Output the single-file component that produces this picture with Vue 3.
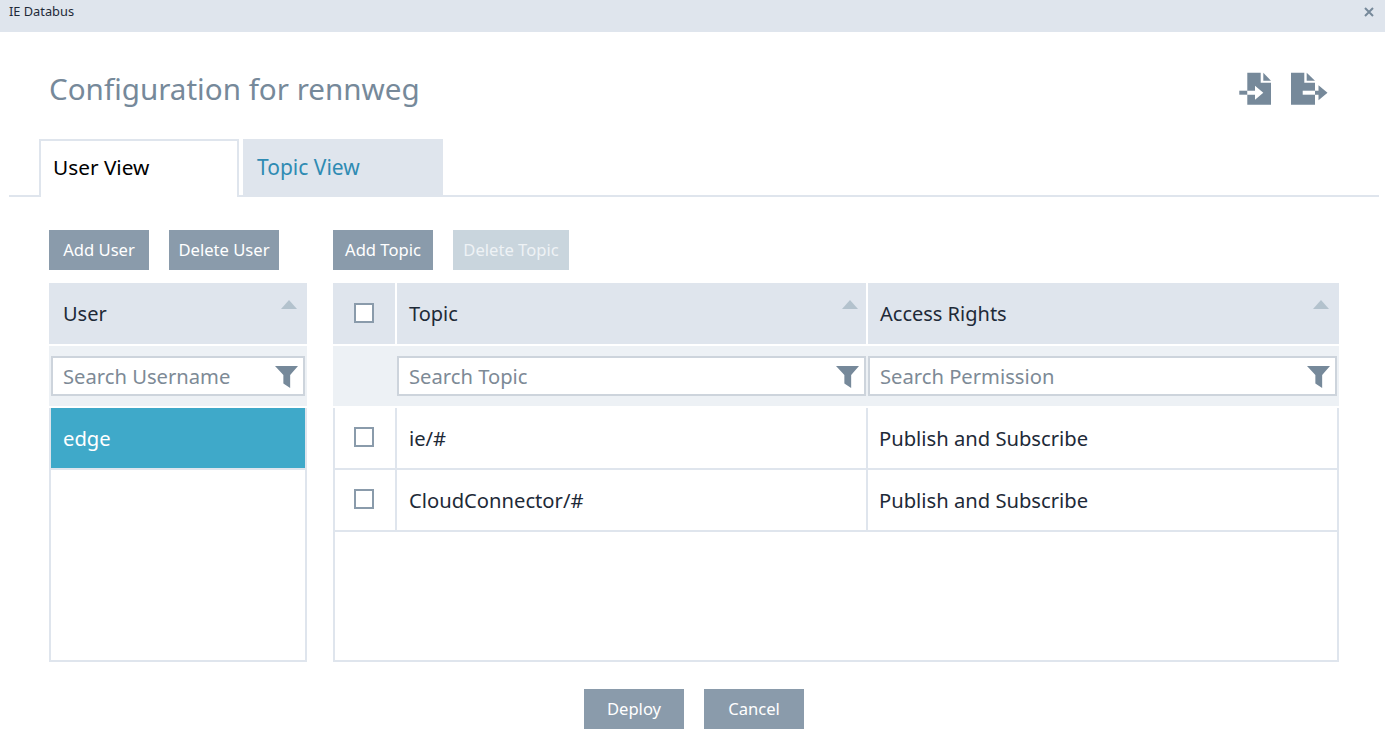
<template>
  <div class="page">
    <div class="titlebar">
      <span>IE Databus</span>
      <svg class="close" width="10" height="10" viewBox="0 0 10 10"><path d="M1 1l8 8M9 1l-8 8" stroke="#76899a" stroke-width="2" fill="none" /></svg>
    </div>

    <div class="heading">
      <h1>Configuration for rennweg</h1>
      <div class="actions">
        <svg width="34" height="34" viewBox="0 0 34 34">
          <path fill="#76899a" d="M9.3.7H22.7V10.7H33V32.7H9.3Z" />
          <path fill="#76899a" d="M25.3.7L33 8.7H25.3Z" />
          <path fill="#76899a" d="M1.3 18.7H9.3V22.7H1.3Z" />
          <path fill="#fff" d="M9.3 18.7H17V13.7L25.3 20.7L17 27.7V22.7H9.3Z" />
        </svg>
        <svg width="38" height="34" viewBox="0 0 38 34">
          <path fill="#76899a" d="M1 .7H14.3V10.7H25V32.7H1Z" />
          <path fill="#76899a" d="M16.7.7L25 8.7H16.7Z" />
          <path fill="#fff" d="M12.7 18.7H25V22.7H12.7Z" />
          <path fill="#76899a" d="M25 18.7H28.5V13.2L37.5 20.7L28.5 28.2V22.7H25Z" />
        </svg>
      </div>
    </div>

    <div class="tabs">
      <div class="tab active">User View</div>
      <div class="tab">Topic View</div>
    </div>

    <div class="content">
      <section class="left">
        <div class="toolbar">
          <button class="btn wide-a">Add User</button>
          <button class="btn wide-b">Delete User</button>
        </div>
        <div class="head-row">
          <div class="head-cell">
            <span>User</span>
            <svg class="sort" width="16" height="9" viewBox="0 0 16 9"><path d="M8 0L16 9H0Z" /></svg>
          </div>
        </div>
        <div class="filter-row">
          <label class="search">
            <input placeholder="Search Username" />
            <svg width="23" height="22" viewBox="0 0 22 22" preserveAspectRatio="none"><path d="M0 0H22L14.5 9V22L8 17.5V9Z" /></svg>
          </label>
        </div>
        <div class="body">
          <div class="user-row selected">edge</div>
        </div>
      </section>

      <section class="right">
        <div class="toolbar">
          <button class="btn wide-a">Add Topic</button>
          <button class="btn wide-c" disabled>Delete Topic</button>
        </div>
        <div class="head-row cols">
          <div class="head-cell check-cell"><span class="box"></span></div>
          <div class="head-cell topic-head">
            <span>Topic</span>
            <svg class="sort" width="16" height="9" viewBox="0 0 16 9"><path d="M8 0L16 9H0Z" /></svg>
          </div>
          <div class="head-cell">
            <span>Access Rights</span>
            <svg class="sort" width="16" height="9" viewBox="0 0 16 9"><path d="M8 0L16 9H0Z" /></svg>
          </div>
        </div>
        <div class="filter-row cols tight">
          <div></div>
          <label class="search">
            <input placeholder="Search Topic" />
            <svg width="23" height="22" viewBox="0 0 22 22" preserveAspectRatio="none"><path d="M0 0H22L14.5 9V22L8 17.5V9Z" /></svg>
          </label>
          <label class="search">
            <input placeholder="Search Permission" />
            <svg width="23" height="22" viewBox="0 0 22 22" preserveAspectRatio="none"><path d="M0 0H22L14.5 9V22L8 17.5V9Z" /></svg>
          </label>
        </div>
        <div class="body">
          <div v-for="row in rows" :key="row.topic" class="topic-row">
            <div class="check-cell"><span class="box"></span></div>
            <div class="cell">{{ row.topic }}</div>
            <div class="cell">{{ row.access }}</div>
          </div>
        </div>
      </section>
    </div>

    <div class="footer">
      <button class="btn wide-a">Deploy</button>
      <button class="btn wide-a">Cancel</button>
    </div>
  </div>
</template>

<script setup>
const rows = [
  { topic: 'ie/#', access: 'Publish and Subscribe' },
  { topic: 'CloudConnector/#', access: 'Publish and Subscribe' }
];
</script>

<style>
html, body { margin: 0; background: #fff; overflow: hidden; }
</style>

<style scoped>
.page {
  width: 1385px;
  height: 744px;
  overflow: hidden;
  font-family: "Noto Sans", "Open Sans", sans-serif;
  color: #1e2a38;
  background: #fff;
}

.titlebar {
  height: 32px;
  background: #dfe5ed;
  display: flex;
  align-items: flex-start;
  justify-content: space-between;
  padding: 3px 11px 0 9px;
  box-sizing: border-box;
  font-size: 12.8px;
  line-height: 16px;
}
.close { margin-top: 4px; }

.heading {
  height: 107px;
  box-sizing: border-box;
  padding: 39px 57px 0 49px;
  display: flex;
  justify-content: space-between;
  align-items: flex-start;
}
.heading h1 {
  margin: 0;
  font-size: 29.6px;
  line-height: 36px;
  font-weight: 400;
  color: #76899a;
}
.actions { display: flex; gap: 18px; margin-top: 1px; }

.tabs {
  margin: 0 6px 0 9px;
  padding-left: 30px;
  height: 58px;
  box-sizing: border-box;
  display: flex;
  gap: 4px;
  border-bottom: 2px solid #dfe5ed;
}
.tab {
  width: 200px;
  height: 56px;
  box-sizing: border-box;
  padding: 13px 14px 0;
  background: #dfe5ed;
  color: #2f8bb3;
  font-size: 21px;
  line-height: 30px;
}
.tab.active {
  background: #fff;
  color: #000;
  border: 2px solid #dfe5ed;
  border-bottom: 0;
  height: 58px;
  padding: 11px 12px 0;
  font-size: 20.8px;
}

.content {
  margin-top: 33px;
  padding: 0 46px 0 49px;
  display: flex;
  gap: 26px;
}
.left { width: 258px; }
.right { width: 1006px; }

.toolbar { display: flex; gap: 20px; height: 40px; margin-bottom: 13px; }

.btn {
  height: 40px;
  padding: 0 0 2px;
  border: 0;
  background: #8a9bab;
  color: #fff;
  font: inherit;
  font-size: 16.6px;
}
.btn:disabled { background: #c9d5dd; color: #eef2f5; }
.wide-a { width: 100px; }
.wide-b { width: 110px; }
.wide-c { width: 116px; }

.head-row { height: 61px; margin-bottom: 2px; }
.head-row.cols { display: grid; grid-template-columns: 62px 469px 471px; gap: 2px; }
.head-cell {
  height: 61px;
  background: #dfe5ed;
  display: flex;
  align-items: center;
  justify-content: space-between;
  padding-left: 14px;
  font-size: 20px;
}
.head-row.cols .head-cell { padding-left: 12px; }
.head-row.cols .check-cell { padding: 0; justify-content: center; }
.sort { align-self: flex-start; margin: 17px 10px 0 0; fill: #b3c2cd; }
.topic-head .sort { margin-right: 8px; }

.filter-row {
  height: 60px;
  margin-bottom: 2px;
  background: #edf1f5;
  padding: 10px 2px;
  box-sizing: border-box;
}
.filter-row.cols.tight {
  display: grid;
  grid-template-columns: 62px 469px 469px;
  gap: 2px;
  padding-left: 0;
}

.search {
  height: 40px;
  box-sizing: border-box;
  border: 2px solid #cdd4dc;
  background: #fff;
  display: flex;
  align-items: center;
  padding: 0 5px 0 10px;
}
.search input {
  flex: 1;
  min-width: 0;
  border: 0;
  padding: 0;
  outline: 0;
  background: transparent;
  font: inherit;
  font-size: 20.2px;
  color: #1e2a38;
}
.search input::placeholder { color: #7d8a96; opacity: 1; }
.search svg { fill: #76899a; flex-shrink: 0; margin-top: 1px; }

.body {
  height: 254px;
  box-sizing: border-box;
  border: 2px solid #dfe5ed;
  border-top: 0;
}
.user-row {
  height: 62px;
  box-sizing: border-box;
  border-bottom: 2px solid #dfe5ed;
  display: flex;
  align-items: center;
  padding-left: 12px;
  font-size: 20.2px;
}
.user-row.selected { background: #3fa9c9; color: #fff; background-clip: padding-box; }

.topic-row {
  height: 62px;
  box-sizing: border-box;
  border-bottom: 2px solid #dfe5ed;
  display: grid;
  grid-template-columns: 62px 471px 1fr;
}
.check-cell { display: flex; align-items: center; justify-content: center; }
.topic-row .check-cell { border-right: 2px solid #dfe5ed; }
.cell {
  display: flex;
  align-items: center;
  padding-left: 12px;
  font-size: 20.2px;
}
.topic-row .cell:nth-child(2) { border-right: 2px solid #dfe5ed; }
.topic-row .cell:nth-child(3) { padding-left: 11px; }
.box {
  width: 20px;
  height: 20px;
  box-sizing: border-box;
  border: 2px solid #8a9bab;
  background: #fff;
  margin-top: -2px;
}
.topic-row .box { margin-left: -2px; }

.footer {
  margin-top: 27px;
  display: flex;
  justify-content: center;
  gap: 20px;
  padding-left: 3px;
}
</style>
